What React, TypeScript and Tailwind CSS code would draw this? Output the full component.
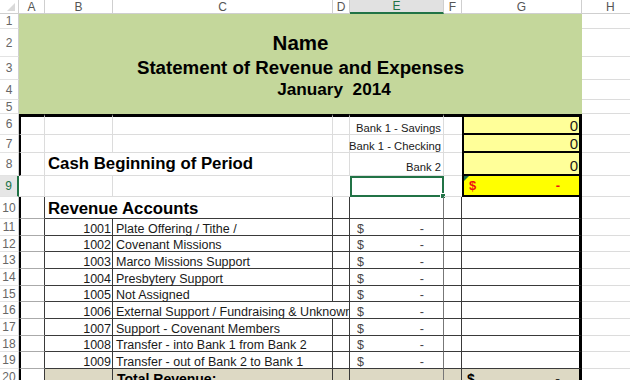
import type { ReactNode } from "react";
import clsx from "clsx";

const GL = "border-[#dcdcdc]"; // sheet gridline
const DK = "border-[#3a3a3a]"; // cell border

const headers = [
  { l: "A", w: "w-[26px]" },
  { l: "B", w: "w-[68px]" },
  { l: "C", w: "w-[220px]" },
  { l: "D", w: "w-[17px]" },
  { l: "E", w: "w-[94px]", active: true },
  { l: "F", w: "w-[18px]" },
  { l: "G", w: "w-[120px]" },
];

const revenue = [
  { code: "1001", name: "Plate Offering / Tithe /", h: "h-[17px]" },
  { code: "1002", name: "Covenant Missions", h: "h-[16px]" },
  { code: "1003", name: "Marco Missions Support", h: "h-[17px]" },
  { code: "1004", name: "Presbytery Support", h: "h-[17px]" },
  { code: "1005", name: "Not Assigned", h: "h-[16px]" },
  { code: "1006", name: "External Support / Fundraising & Unknown", h: "h-[17px]", wide: true },
  { code: "1007", name: "Support - Covenant Members", h: "h-[17px]" },
  { code: "1008", name: "Transfer - into Bank 1 from Bank 2", h: "h-[16px]" },
  { code: "1009", name: "Transfer - out of Bank 2 to Bank 1", h: "h-[17px]" },
];

function Cell({ w, className, children }: { w: string; className?: string; children?: ReactNode }) {
  return <div className={clsx("relative flex shrink-0", w, className)}>{children}</div>;
}

function RowNum({ n, active }: { n: number; active?: boolean }) {
  return (
    <div
      className={clsx(
        "flex w-[19px] shrink-0 items-center justify-center border-b border-b-[#e3e3e3] text-[12px]",
        active ? "border-r-2 border-r-[#217346] bg-[#e6e6e6] text-[#217346]" : "border-r border-r-[#cfcfcf] text-[#666]"
      )}
    >
      {n}
    </div>
  );
}

function HCell() {
  return <div className={clsx("flex-1 border-b", GL)} />;
}

function TitleRow({ n, h, children }: { n: number; h: string; children?: ReactNode }) {
  return (
    <div className={clsx("flex", h)}>
      <RowNum n={n} />
      <div className="flex w-[563px] shrink-0 items-center justify-center bg-[#c4d79b] font-bold text-black">
        {children}
      </div>
      <HCell />
    </div>
  );
}

export default function App() {
  return (
    <div className="h-[380px] w-[630px] overflow-hidden bg-white font-['Liberation_Sans',Arial,sans-serif] text-[#1a1a1a]">
      {/* column headers */}
      <div className="flex h-[14px]">
        <div className="relative w-[19px] shrink-0 border-r border-b border-[#cfcfcf]">
          <svg className="absolute right-[3px] bottom-[2px]" width="8" height="8">
            <polygon points="8,0 8,8 0,8" fill="#d9d9d9" />
          </svg>
        </div>
        {headers.map((c) => (
          <div
            key={c.l}
            className={clsx(
              "flex shrink-0 items-center justify-center text-[12px] leading-none",
              c.w,
              c.active
                ? "border-r border-b-2 border-r-[#cfcfcf] border-b-[#217346] bg-[#e1e1e1] text-[#217346]"
                : "border-r border-b border-[#cfcfcf] text-[#555]"
            )}
          >
            {c.l}
          </div>
        ))}
        <div className="flex flex-1 items-center border-b border-[#cfcfcf] pl-[24px] text-[12px] leading-none text-[#555]">
          H
        </div>
      </div>

      {/* title block */}
      <TitleRow n={1} h="h-[15px]" />
      <TitleRow n={2} h="h-[28px]">
        <span className="text-[20.5px] leading-none">Name</span>
      </TitleRow>
      <TitleRow n={3} h="h-[23px]">
        <span className="text-[18.7px] leading-none">Statement of Revenue and Expenses</span>
      </TitleRow>
      <TitleRow n={4} h="h-[20px]">
        <span className="whitespace-pre pl-[67px] text-[17.2px] leading-none">January  2014</span>
      </TitleRow>
      <TitleRow n={5} h="h-[14px]" />

      {/* row 6 */}
      <div className="flex h-[21px]">
        <RowNum n={6} />
        <Cell w="w-[26px]" className={clsx("border-t-[3px] border-r border-b border-l-2", GL, "border-t-black border-l-black")} />
        <Cell w="w-[68px]" className={clsx("border-t-[3px] border-r border-b", GL, "border-t-black")} />
        <Cell w="w-[220px]" className={clsx("border-t-[3px] border-r border-b", GL, "border-t-black")} />
        <Cell w="w-[17px]" className={clsx("border-t-[3px] border-r border-b", GL, "border-t-black")} />
        <Cell w="w-[94px]" className={clsx("items-end justify-end border-t-[3px] border-r border-b pr-[2px] text-[11.25px] leading-none whitespace-nowrap", GL, "border-t-black")}>
          Bank 1 - Savings
        </Cell>
        <Cell w="w-[18px]" className={clsx("border-t-[3px] border-b", GL, "border-t-black")} />
        <Cell w="w-[120px]" className="items-end justify-end border-t-[3px] border-r-[3px] border-b-2 border-l-2 border-black bg-[#ffff99] pr-[1px] text-[15px] leading-none">
          0
        </Cell>
        <HCell />
      </div>

      {/* row 7 */}
      <div className="flex h-[18px]">
        <RowNum n={7} />
        <Cell w="w-[26px]" className={clsx("border-r border-b border-l-2", GL, "border-l-black")} />
        <Cell w="w-[68px]" className={clsx("border-r border-b", GL)} />
        <Cell w="w-[220px]" className={clsx("border-r border-b", GL)} />
        <Cell w="w-[17px]" className={clsx("border-r border-b", GL)} />
        <Cell w="w-[94px]" className={clsx("items-end justify-end border-r border-b pr-[2px] text-[11.25px] leading-none whitespace-nowrap", GL)}>
          Bank 1 - Checking
        </Cell>
        <Cell w="w-[18px]" className={clsx("border-b", GL)} />
        <Cell w="w-[120px]" className="items-end justify-end border-r-[3px] border-b-2 border-l-2 border-black bg-[#ffff99] pr-[1px] text-[15px] leading-none">
          0
        </Cell>
        <HCell />
      </div>

      {/* row 8 */}
      <div className="flex h-[23px]">
        <RowNum n={8} />
        <Cell w="w-[26px]" className={clsx("border-r border-b border-l-2", GL, "border-l-black")} />
        <Cell w="w-[68px]" className={clsx("items-end border-b pb-[2px] pl-[3px] text-[16.8px] leading-none font-bold whitespace-nowrap text-black", GL)}>
          Cash Beginning of Period
        </Cell>
        <Cell w="w-[220px]" className={clsx("border-r border-b", GL)} />
        <Cell w="w-[17px]" className={clsx("border-r border-b", GL)} />
        <Cell w="w-[94px]" className={clsx("items-end justify-end border-r border-b pr-[2px] pb-[2px] text-[11.25px] leading-none whitespace-nowrap", GL)}>
          Bank 2
        </Cell>
        <Cell w="w-[18px]" className={clsx("border-b", GL)} />
        <Cell w="w-[120px]" className="items-end justify-end border-r-[3px] border-b-2 border-l-2 border-black bg-[#ffff99] pr-[1px] pb-[1px] text-[15px] leading-none">
          0
        </Cell>
        <HCell />
      </div>

      {/* row 9 */}
      <div className="flex h-[21px]">
        <RowNum n={9} active />
        <Cell w="w-[26px]" className={clsx("border-r border-b", GL)} />
        <Cell w="w-[68px]" className={clsx("border-r border-b", GL)} />
        <Cell w="w-[220px]" className={clsx("border-r border-b", GL)} />
        <Cell w="w-[17px]" className={clsx("border-b", GL)} />
        <Cell w="w-[94px]" className="border-2 border-[#217346]">
          <span className="absolute right-[-4px] bottom-[-4px] h-[6px] w-[6px] border border-white bg-[#217346]" />
        </Cell>
        <Cell w="w-[18px]" className={clsx("border-b", GL)} />
        <Cell w="w-[120px]" className="items-center justify-between border-r-[3px] border-b-2 border-l-2 border-black bg-[#ffff00] pr-[19px] pl-[5px] text-[13px] leading-none font-bold text-[#ee1111]">
          <svg className="absolute top-0 left-0" width="5" height="5">
            <polygon points="0,0 5,0 0,5" fill="#217346" />
          </svg>
          <span>$</span>
          <span>-</span>
        </Cell>
        <HCell />
      </div>

      {/* row 10 */}
      <div className="flex h-[22px]">
        <RowNum n={10} />
        <Cell w="w-[26px]" className={clsx("border-b border-l-2 border-l-black border-r", DK, "border-b-[#aaa]")} />
        <Cell w="w-[68px]" className={clsx("items-end border-b pl-[3px] text-[16.8px] leading-none font-bold whitespace-nowrap text-black", DK)}>
          Revenue Accounts
        </Cell>
        <Cell w="w-[220px]" className={clsx("border-r border-b", DK)} />
        <Cell w="w-[17px]" className={clsx("border-r border-b", DK)} />
        <Cell w="w-[94px]" className={clsx("border-r border-b", DK, "border-r-[#777]")} />
        <Cell w="w-[18px]" className={clsx("border-r border-b", DK)} />
        <Cell w="w-[120px]" className={clsx("border-r-[3px] border-b border-r-black", DK)} />
        <HCell />
      </div>

      {/* rows 11-19 */}
      {revenue.map((r, i) => (
        <div key={r.code} className={clsx("flex", r.h)}>
          <RowNum n={11 + i} />
          <Cell w="w-[26px]" className={clsx("border-b border-l-2 border-l-black border-r", DK, "border-b-[#aaa]")} />
          <Cell w="w-[68px]" className={clsx("items-end justify-end border-r border-b pr-[1px] text-[12.5px] leading-[12px]", DK)}>
            {r.code}
          </Cell>
          {r.wide ? (
            <Cell w="w-[237px]" className={clsx("items-end overflow-hidden border-r border-b pl-[3px] text-[12.5px] leading-[12px] whitespace-nowrap", DK)}>
              {r.name}
            </Cell>
          ) : (
            <>
              <Cell w="w-[220px]" className={clsx("items-end border-r border-b pl-[3px] text-[12.5px] leading-[12px] whitespace-nowrap", DK)}>
                {r.name}
              </Cell>
              <Cell w="w-[17px]" className={clsx("border-r border-b", DK)} />
            </>
          )}
          <Cell w="w-[94px]" className={clsx("items-end justify-between border-r border-b pr-[19px] pl-[7px] text-[12.5px] leading-[12px] text-[#444]", DK, "border-r-[#777]")}>
            <span>$</span>
            <span>-</span>
          </Cell>
          <Cell w="w-[18px]" className={clsx("border-r border-b", DK)} />
          <Cell w="w-[120px]" className={clsx("border-r-[3px] border-b border-r-black", DK)} />
          <HCell />
        </div>
      ))}

      {/* row 20 */}
      <div className="flex h-[17px]">
        <RowNum n={20} />
        <Cell w="w-[26px]" className={clsx("border-l-2 border-l-black border-r", DK)} />
        <Cell w="w-[68px]" className={clsx("border-r bg-[#ddd9c4]", DK)} />
        <Cell w="w-[220px]" className={clsx("items-end border-r bg-[#ddd9c4] pl-[4px] text-[14px] leading-[14px] font-bold whitespace-nowrap text-black", DK)}>
          Total Revenue:
        </Cell>
        <Cell w="w-[17px]" className={clsx("border-r bg-[#ddd9c4]", DK)} />
        <Cell w="w-[94px]" className={clsx("border-r bg-[#ddd9c4]", DK, "border-r-[#777]")} />
        <Cell w="w-[18px]" className={clsx("border-r bg-[#ddd9c4]", DK)} />
        <Cell w="w-[120px]" className="items-end justify-between border-r-[3px] border-r-black bg-[#ddd9c4] pr-[19px] pl-[5px] text-[14px] leading-[14px] font-bold text-black">
          <span>$</span>
          <span>-</span>
        </Cell>
        <HCell />
      </div>
    </div>
  );
}
